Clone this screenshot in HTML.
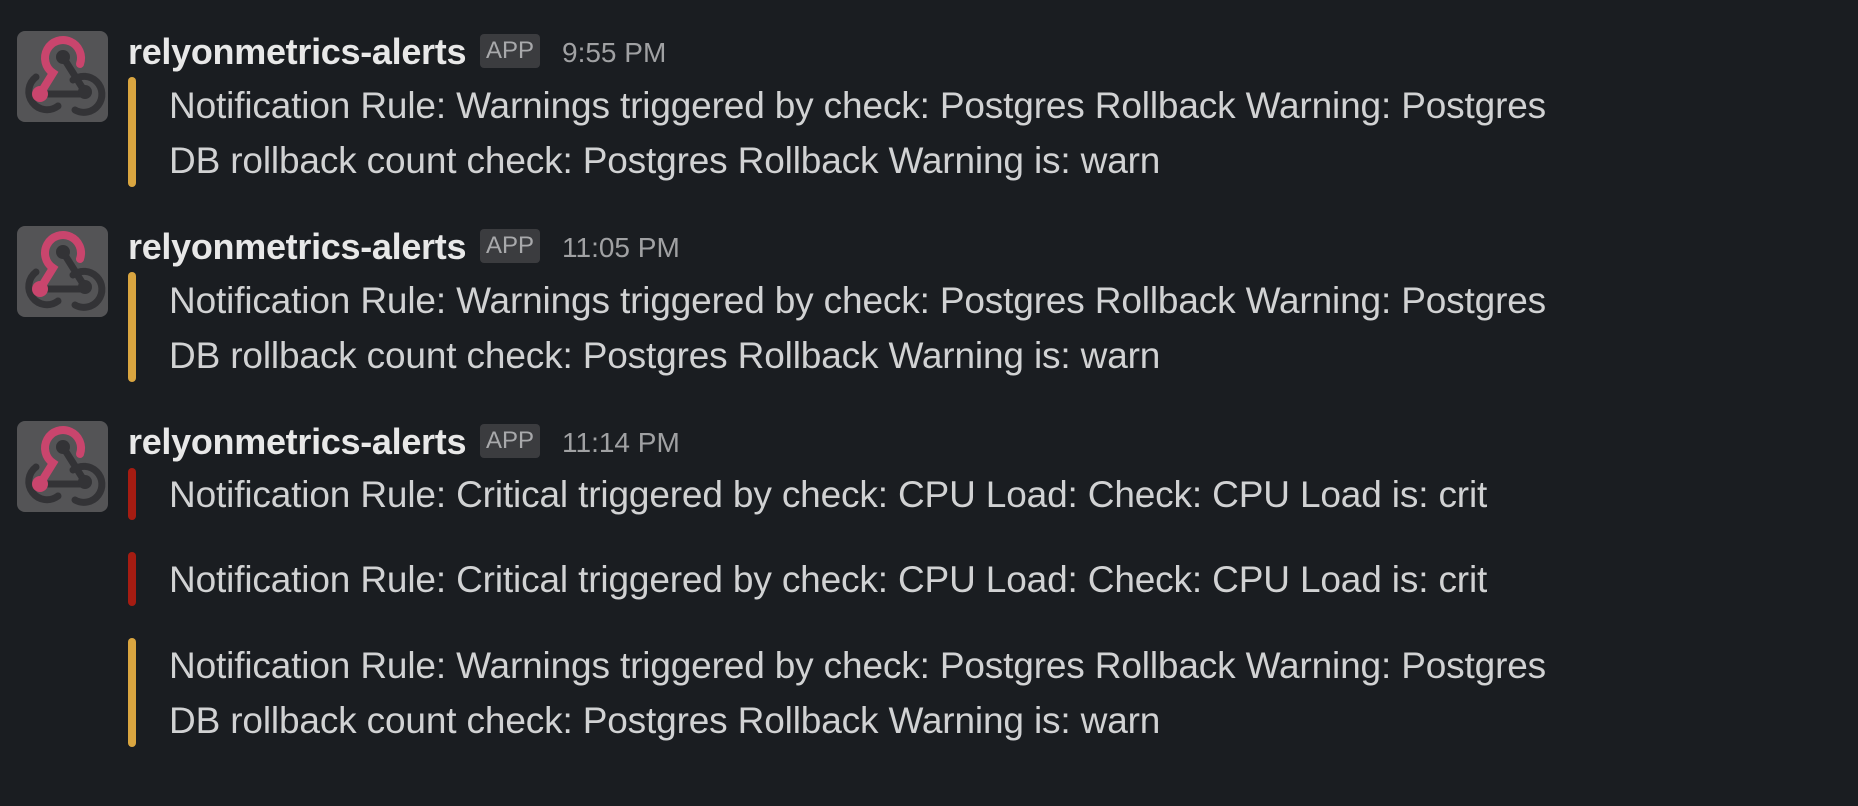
<!DOCTYPE html>
<html><head><meta charset="utf-8"><style>
html,body{margin:0;padding:0;background:#1a1d21;width:1858px;height:806px;overflow:hidden;font-family:"Liberation Sans",sans-serif;color:#d1d2d3}
.a{position:absolute}
.av{width:91px;height:91px;border-radius:8px;background:#545456;overflow:hidden}
.name{font-weight:bold;font-size:36px;color:#e8e8e8;white-space:nowrap;letter-spacing:-0.3px}
.app{background:#3b3c3f;color:#a8a9ab;font-size:24px;border-radius:4px;padding:0 6px;height:34px;line-height:34px}
.time{font-size:28px;color:#a0a1a3}
.bar{width:8px;border-radius:4px}
.y{background:#d9a540}.r{background:#a51c12}
.msg{font-size:37px;line-height:55px;white-space:nowrap;letter-spacing:-0.15px}
</style></head><body>
<svg width="0" height="0" style="position:absolute"><defs><g id="ic">
<g fill="none" stroke="#333336" stroke-width="7" stroke-linecap="round">
<path d="M46 26 L68 61"/><path d="M23 63 H68"/>
<path d="M19 46 A18 18 0 1 0 41 75"/>
<path d="M56 49 A18 18 0 1 1 58 79"/>
</g>
<circle cx="46" cy="26" r="7" fill="#333336"/>
<circle cx="68" cy="61" r="7" fill="#333336"/>
<path d="M63 33 A18 18 0 1 0 36 42 L23 63" fill="none" stroke="#c9456d" stroke-width="8" stroke-linecap="round"/>
<circle cx="23" cy="63" r="8" fill="#c9456d"/>
</g></defs></svg>

<div class="a av" style="left:17px;top:31px"><svg width="91" height="91"><use href="#ic"/></svg></div>
<div class="a name" style="left:128px;top:31px">relyonmetrics-alerts</div>
<div class="a app" style="left:480px;top:34px">APP</div>
<div class="a time" style="left:562px;top:37px">9:55 PM</div>
<div class="a bar y" style="left:128px;top:77px;height:110px"></div>
<div class="a msg" style="left:169px;top:78px">Notification Rule: Warnings triggered by check: Postgres Rollback Warning: Postgres<br>DB rollback count check: Postgres Rollback Warning is: warn</div>

<div class="a av" style="left:17px;top:226px"><svg width="91" height="91"><use href="#ic"/></svg></div>
<div class="a name" style="left:128px;top:226px">relyonmetrics-alerts</div>
<div class="a app" style="left:480px;top:229px">APP</div>
<div class="a time" style="left:562px;top:232px">11:05 PM</div>
<div class="a bar y" style="left:128px;top:272px;height:110px"></div>
<div class="a msg" style="left:169px;top:273px">Notification Rule: Warnings triggered by check: Postgres Rollback Warning: Postgres<br>DB rollback count check: Postgres Rollback Warning is: warn</div>

<div class="a av" style="left:17px;top:421px"><svg width="91" height="91"><use href="#ic"/></svg></div>
<div class="a name" style="left:128px;top:421px">relyonmetrics-alerts</div>
<div class="a app" style="left:480px;top:424px">APP</div>
<div class="a time" style="left:562px;top:427px">11:14 PM</div>
<div class="a bar r" style="left:128px;top:468px;height:52px"></div>
<div class="a msg" style="left:169px;top:467px">Notification Rule: Critical triggered by check: CPU Load: Check: CPU Load is: crit</div>
<div class="a bar r" style="left:128px;top:552px;height:54px"></div>
<div class="a msg" style="left:169px;top:552px">Notification Rule: Critical triggered by check: CPU Load: Check: CPU Load is: crit</div>
<div class="a bar y" style="left:128px;top:638px;height:109px"></div>
<div class="a msg" style="left:169px;top:638px">Notification Rule: Warnings triggered by check: Postgres Rollback Warning: Postgres<br>DB rollback count check: Postgres Rollback Warning is: warn</div>
</body></html>
